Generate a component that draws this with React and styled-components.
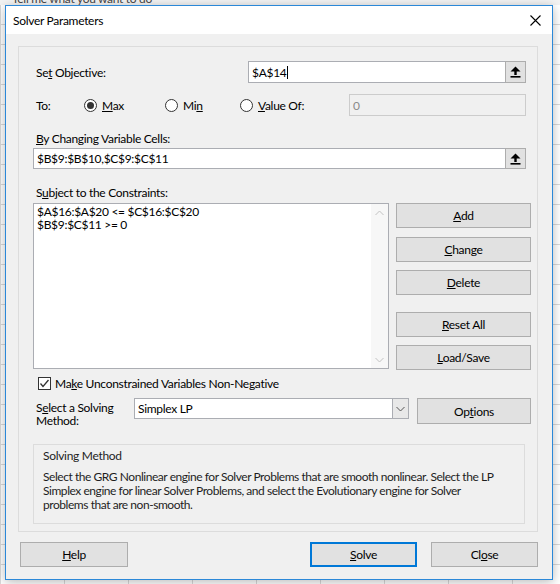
import React from "react";
import styled, { createGlobalStyle } from "styled-components";

const Global = createGlobalStyle`
  html, body { margin: 0; padding: 0; }
  body {
    font-family: "Segoe UI", Lato, "Noto Sans", sans-serif;
    font-size: 12px;
    letter-spacing: -0.3px;
    color: #000;
  }
`;

const Screen = styled.div`
  position: relative;
  width: 560px;
  height: 584px;
  overflow: hidden;
  background-color: #ffffff;
  background-image: linear-gradient(#d9d9d9 1px, transparent 1px),
    linear-gradient(90deg, #d9d9d9 1px, transparent 1px);
  background-size: 64px 20px;
  background-position: 0 4px;
`;

const Ribbon = styled.div`
  height: 5px;
  overflow: hidden;
  background: #f3f3f3;
  padding-left: 12px;
  font-size: 12px;
  line-height: 1;
  color: #444;
`;

const RibbonText = styled.div`
  margin-top: -7px;
`;

const Dialog = styled.div`
  position: absolute;
  left: 5px;
  top: 5px;
  width: 546px;
  height: 573px;
  border: 1px solid #2b88d8;
  background: #f0f0f0;
  box-shadow: 0 2px 10px rgba(0, 0, 0, 0.28);
  display: flex;
  flex-direction: column;
`;

const TitleBar = styled.div`
  height: 28px;
  background: #fff;
  display: flex;
  align-items: center;
  justify-content: space-between;
  padding: 0 9px 0 7px;
`;

const Title = styled.span`
  font-size: 12px;
  padding-top: 1px;
`;

const CloseX = styled.div`
  width: 16px;
  height: 16px;
  display: flex;
  align-items: center;
  justify-content: center;
`;

const Body = styled.div`
  flex: 1;
  padding: 12px 14px 12px 12px;
  display: flex;
  flex-direction: column;
`;

const GroupBox = styled.div`
  width: 498px;
  height: 484px;
  border: 1px solid #dcdcdc;
  padding: 0 6px 0 14px;
  box-sizing: content-box;
  display: flex;
  flex-direction: column;
  flex-shrink: 0;
`;

const Row = styled.div`
  display: flex;
  align-items: ${(p) => p.$align || "center"};
  margin-top: ${(p) => p.$mt || 0}px;
  white-space: nowrap;
  flex-shrink: 0;
`;

const Label = styled.div`
  width: ${(p) => (p.$w ? p.$w + "px" : "auto")};
  padding-left: 3px;
  padding-top: ${(p) => p.$pt || 0}px;
  box-sizing: border-box;
  line-height: ${(p) => p.$lh || 15}px;
  flex-shrink: 0;
`;

const RefField = styled.div`
  width: ${(p) => p.$w}px;
  height: ${(p) => p.$h}px;
  box-sizing: border-box;
  border: 1px solid #abadb3;
  background: #fff;
  display: flex;
  align-items: stretch;
`;

const FieldText = styled.div`
  flex: 1;
  display: flex;
  align-items: center;
  padding-left: 3px;
  color: #000;
`;

const Caret = styled.span`
  display: inline-block;
  width: 1px;
  height: 13px;
  background: #000;
  margin-left: 1px;
`;

const RefButton = styled.div`
  width: 21px;
  box-sizing: border-box;
  border: 1px solid #adadad;
  background: #e1e1e1;
  display: flex;
  align-items: center;
  justify-content: center;
  margin: -1px -1px -1px 0;
`;

const DisabledField = styled.div`
  width: 177px;
  height: 22px;
  box-sizing: border-box;
  border: 1px solid #cccccc;
  background: #f0f0f0;
  padding: 1px 3px;
  display: flex;
  align-items: center;
  color: #8a8a8a;
  margin-left: ${(p) => p.$ml}px;
`;

const RadioItem = styled.div`
  display: flex;
  align-items: center;
  gap: 5px;
  width: ${(p) => p.$w}px;
  flex-shrink: 0;
`;

const RadioCircle = styled.div`
  width: 13px;
  height: 13px;
  box-sizing: border-box;
  border: 1px solid #333;
  border-radius: 50%;
  background: #fff;
  display: flex;
  align-items: center;
  justify-content: center;
  &::after {
    content: "";
    width: 7px;
    height: 7px;
    border-radius: 50%;
    background: ${(p) => (p.$checked ? "#333" : "transparent")};
  }
`;

const ListArea = styled.div`
  width: 358px;
  height: 166px;
  box-sizing: border-box;
  border: 1px solid #abadb3;
  background: #fff;
  display: flex;
`;

const ListText = styled.div`
  flex: 1;
  padding: 1px 0 0 3px;
  line-height: 13px;
`;

const ScrollBar = styled.div`
  width: 17px;
  background: #f7f7f7;
  display: flex;
  flex-direction: column;
  justify-content: space-between;
  align-items: center;
  padding: 6px 0 5px;
`;

const ButtonCol = styled.div`
  margin-left: 7px;
  display: flex;
  flex-direction: column;
`;

const Button = styled.div`
  width: ${(p) => p.$w}px;
  height: ${(p) => p.$h || 25}px;
  margin-top: ${(p) => p.$mt || 0}px;
  margin-left: ${(p) => p.$ml || 0}px;
  box-sizing: border-box;
  border: ${(p) => (p.$default ? "2px solid #0078d7" : "1px solid #adadad")};
  background: #e1e1e1;
  display: flex;
  align-items: center;
  justify-content: center;
  flex-shrink: 0;
`;

const CheckBox = styled.div`
  width: 13px;
  height: 13px;
  box-sizing: border-box;
  border: 1px solid #333;
  background: #fff;
  margin-left: 5px;
  margin-right: 4px;
  display: flex;
  align-items: center;
  justify-content: center;
`;

const Select = styled.div`
  width: 277px;
  height: 21px;
  box-sizing: border-box;
  border: 1px solid #abadb3;
  background: #fff;
  display: flex;
  margin-left: 1px;
`;

const SelectText = styled.div`
  flex: 1;
  padding-left: 3px;
  display: flex;
  align-items: center;
`;

const SelectArrow = styled.div`
  width: 16px;
  box-sizing: border-box;
  border-left: 1px solid #abadb3;
  background: #e8e8e8;
  display: flex;
  align-items: center;
  justify-content: center;
`;

const InfoBox = styled.div`
  width: 492px;
  height: 80px;
  box-sizing: border-box;
  border: 1px solid #dcdcdc;
  padding: 3px 9px 0 9px;
`;

const InfoTitle = styled.div`
  line-height: 15px;
  color: #1e1e1e;
`;

const InfoText = styled.div`
  margin-top: 7px;
  line-height: 14px;
  letter-spacing: -0.45px;
  color: #1e1e1e;
`;

const Footer = styled.div`
  display: flex;
  margin-top: 10px;
  padding-left: 2px;
`;

const RefIcon = () => (
  <svg width="11" height="12" viewBox="0 0 11 12">
    <polygon points="5.5,0.5 0.5,5.5 10.5,5.5" fill="#000" />
    <rect x="4.3" y="5" width="2.4" height="4" fill="#000" />
    <rect x="0.5" y="10" width="10" height="1.6" fill="#000" />
  </svg>
);

const Chevron = ({ up, color = "#c2c2c2" }) => (
  <svg width="9" height="6" viewBox="0 0 9 6">
    <polyline
      points={up ? "0.5,5 4.5,1 8.5,5" : "0.5,1 4.5,5 8.5,1"}
      fill="none"
      stroke={color}
      strokeWidth="1"
    />
  </svg>
);

const U = styled.u`
  text-underline-offset: 1px;
`;

export default function App() {
  return (
    <>
      <Global />
      <Screen>
        <Ribbon>
          <RibbonText>Tell me what you want to do</RibbonText>
        </Ribbon>
        <Dialog>
          <TitleBar>
            <Title>Solver Parameters</Title>
            <CloseX>
              <svg width="11" height="11" viewBox="0 0 11 11">
                <path d="M0.5 0.5 L10.5 10.5 M10.5 0.5 L0.5 10.5" stroke="#000" strokeWidth="1.1" />
              </svg>
            </CloseX>
          </TitleBar>
          <Body>
            <GroupBox>
              <Row $mt={14}>
                <Label $w={215}>
                  Se<U>t</U> Objective:
                </Label>
                <RefField $w={278} $h={22}>
                  <FieldText>
                    $A$14<Caret />
                  </FieldText>
                  <RefButton>
                    <RefIcon />
                  </RefButton>
                </RefField>
              </Row>
              <Row $mt={11}>
                <Label $w={51}>To:</Label>
                <RadioItem $w={81}>
                  <RadioCircle $checked />
                  <span>
                    <U>M</U>ax
                  </span>
                </RadioItem>
                <RadioItem $w={75}>
                  <RadioCircle />
                  <span>
                    Mi<U>n</U>
                  </span>
                </RadioItem>
                <RadioItem $w={100}>
                  <RadioCircle />
                  <span>
                    <U>V</U>alue Of:
                  </span>
                </RadioItem>
                <DisabledField $ml={9}>0</DisabledField>
              </Row>
              <Row $mt={15}>
                <Label>
                  <U>B</U>y Changing Variable Cells:
                </Label>
              </Row>
              <Row $mt={2}>
                <RefField $w={493} $h={21}>
                  <FieldText>$B$9:$B$10,$C$9:$C$11</FieldText>
                  <RefButton>
                    <RefIcon />
                  </RefButton>
                </RefField>
              </Row>
              <Row $mt={16}>
                <Label>
                  S<U>u</U>bject to the Constraints:
                </Label>
              </Row>
              <Row $mt={3} $align="flex-start">
                <ListArea>
                  <ListText>
                    $A$16:$A$20 &lt;= $C$16:$C$20
                    <br />
                    $B$9:$C$11 &gt;= 0
                  </ListText>
                  <ScrollBar>
                    <Chevron up />
                    <Chevron />
                  </ScrollBar>
                </ListArea>
                <ButtonCol>
                  <Button $w={135}>
                    <span>
                      <U>A</U>dd
                    </span>
                  </Button>
                  <Button $w={135} $mt={9}>
                    <span>
                      <U>C</U>hange
                    </span>
                  </Button>
                  <Button $w={135} $mt={8}>
                    <span>
                      <U>D</U>elete
                    </span>
                  </Button>
                  <Button $w={135} $mt={17}>
                    <span>
                      <U>R</U>eset All
                    </span>
                  </Button>
                  <Button $w={135} $mt={8}>
                    <span>
                      <U>L</U>oad/Save
                    </span>
                  </Button>
                </ButtonCol>
              </Row>
              <Row $mt={6}>
                <CheckBox>
                  <svg width="11" height="11" viewBox="0 0 11 11">
                    <polyline points="1.5,5.5 4,8.5 9.5,2" fill="none" stroke="#333" strokeWidth="1.3" />
                  </svg>
                </CheckBox>
                <span>
                  Ma<U>k</U>e Unconstrained Variables Non-Negative
                </span>
              </Row>
              <Row $mt={7} $align="flex-start">
                <Label $w={100} $lh={13} $pt={3}>
                  S<U>e</U>lect a Solving
                  <br />
                  Method:
                </Label>
                <Select>
                  <SelectText>Simplex LP</SelectText>
                  <SelectArrow>
                    <Chevron color="#555" />
                  </SelectArrow>
                </Select>
                <Button $w={114} $h={26} $ml={8}>
                  <span>
                    Op<U>t</U>ions
                  </span>
                </Button>
              </Row>
              <Row $mt={17}>
                <InfoBox>
                  <InfoTitle>Solving Method</InfoTitle>
                  <InfoText>
                    Select the GRG Nonlinear engine for Solver Problems that are smooth nonlinear. Select the LP
                    <br />
                    Simplex engine for linear Solver Problems, and select the Evolutionary engine for Solver
                    <br />
                    problems that are non-smooth.
                  </InfoText>
                </InfoBox>
              </Row>
            </GroupBox>
            <Footer>
              <Button $w={108}>
                <span>
                  <U>H</U>elp
                </span>
              </Button>
              <Button $w={107} $default $ml={182}>
                <span>
                  <U>S</U>olve
                </span>
              </Button>
              <Button $w={107} $ml={14}>
                <span>
                  Cl<U>o</U>se
                </span>
              </Button>
            </Footer>
          </Body>
        </Dialog>
      </Screen>
    </>
  );
}
